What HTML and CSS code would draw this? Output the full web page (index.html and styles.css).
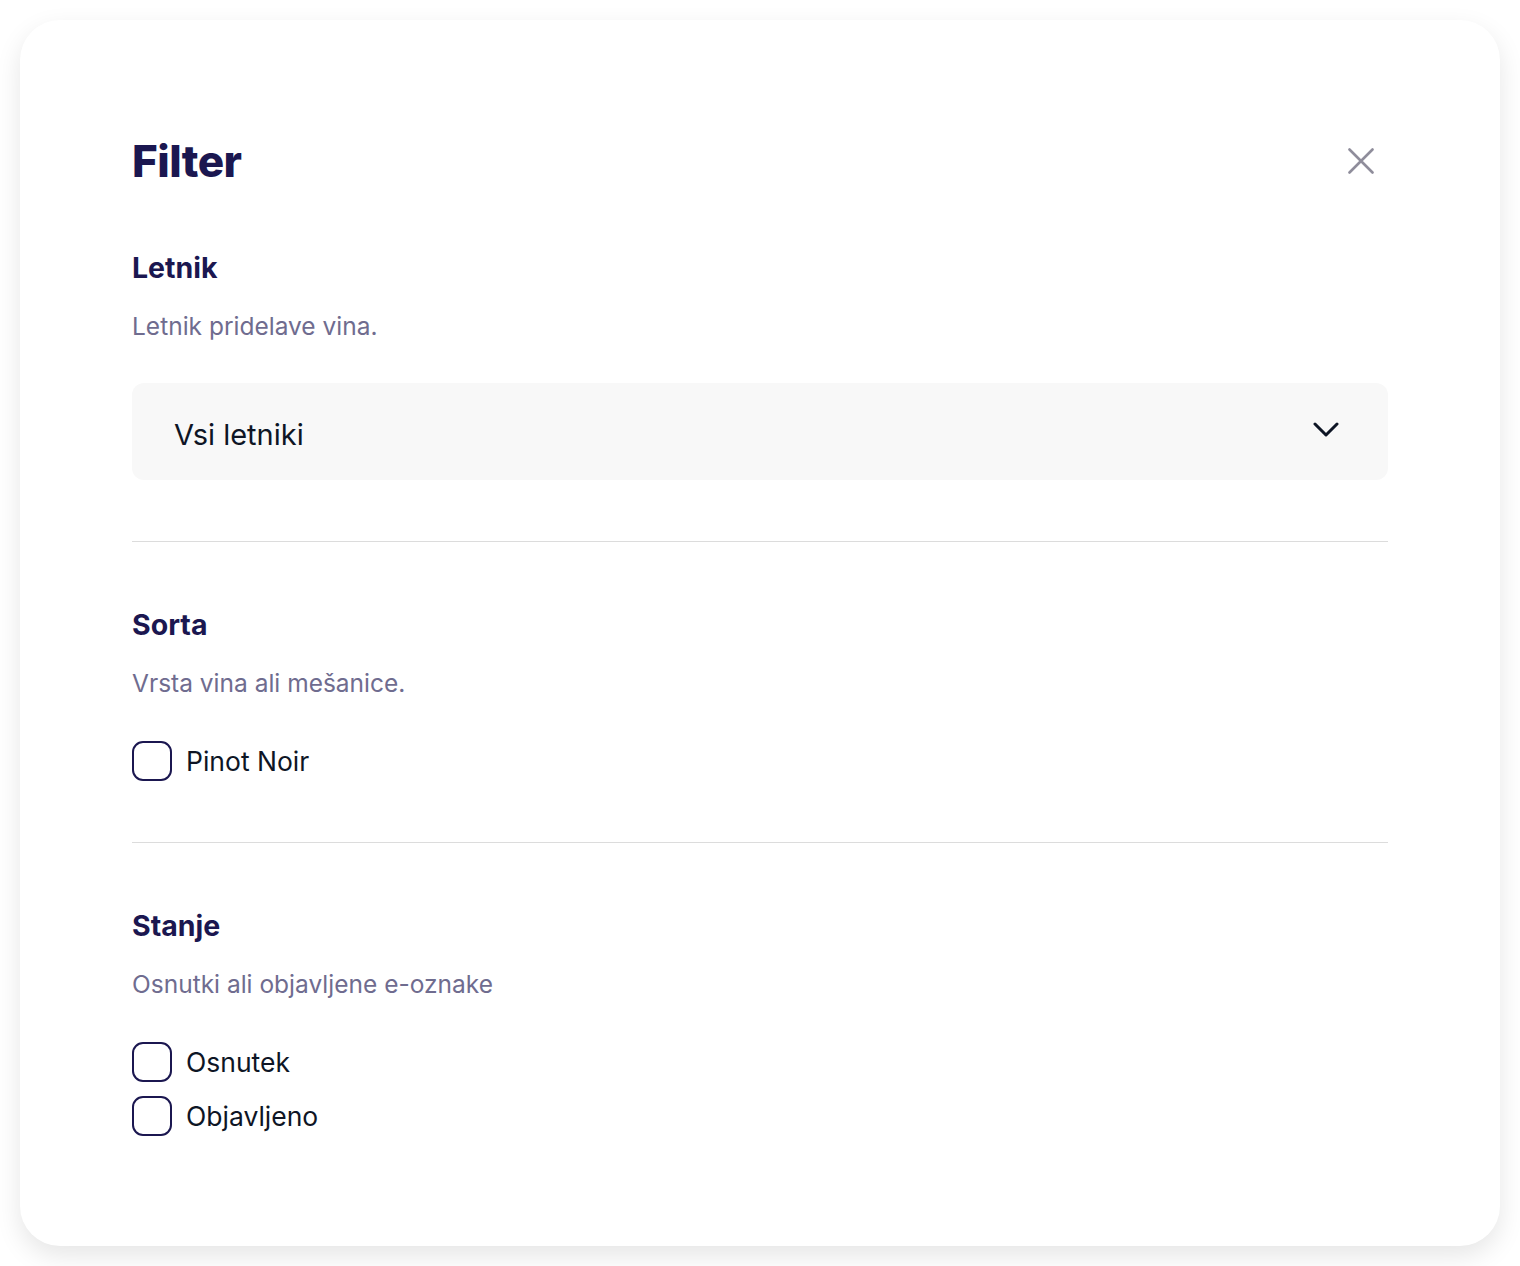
FILE: index.html
```html
<!DOCTYPE html>
<html lang="sl">
<head>
    <meta charset="UTF-8">
    <meta name="viewport" content="width=device-width, initial-scale=1.0">
    <title>Filter</title>
    <link rel="stylesheet" href="styles.css">
</head>
<body>

<div class="filter-card">
    <div class="filter-header">
        <h1>Filter</h1>
        <button class="close-btn" aria-label="Zapri">
            <svg width="26" height="26" viewBox="0 0 26 26" fill="none" stroke="currentColor" stroke-width="2.6" stroke-linecap="round">
                <path d="M1.5 1.5 L24.5 24.5 M24.5 1.5 L1.5 24.5"/>
            </svg>
        </button>
    </div>

    <div class="filter-section">
        <h2>Letnik</h2>
        <p class="hint">Letnik pridelave vina.</p>
        <div class="select">
            <span>Vsi letniki</span>
            <svg width="26" height="16" viewBox="0 0 26 16" fill="none" stroke="currentColor" stroke-width="3" stroke-linecap="round" stroke-linejoin="round">
                <path d="M2 2 L13 13 L24 2"/>
            </svg>
        </div>
    </div>

    <div class="filter-section">
        <h2>Sorta</h2>
        <p class="hint">Vrsta vina ali mešanice.</p>
        <div class="options">
            <label class="option"><span class="box"></span>Pinot Noir</label>
        </div>
    </div>

    <div class="filter-section">
        <h2>Stanje</h2>
        <p class="hint">Osnutki ali objavljene e-oznake</p>
        <div class="options">
            <label class="option"><span class="box"></span>Osnutek</label>
            <label class="option"><span class="box"></span>Objavljeno</label>
        </div>
    </div>
</div>

</body>
</html>
```

FILE: styles.css
```css
* {
    box-sizing: border-box;
    margin: 0;
    padding: 0;
}

body {
    background: #ffffff;
    font-family: Inter, "Noto Sans", sans-serif;
    color: #1b1750;
    padding: 20px;
    overflow: hidden;
}

.filter-card {
    background: #ffffff;
    border-radius: 40px;
    height: 1226px;
    padding: 116px 112px 111px;
    box-shadow: 0 10px 26px rgba(0, 0, 0, 0.1);
}

.filter-header {
    display: flex;
    align-items: center;
    justify-content: space-between;
    height: 50px;
    margin-bottom: 64px;
}

.filter-header h1 {
    font-size: 44px;
    line-height: 50px;
    font-weight: 800;
    letter-spacing: -0.5px;
}

.close-btn {
    width: 54px;
    height: 54px;
    display: flex;
    align-items: center;
    justify-content: center;
    background: none;
    border: none;
    color: #8f8d9b;
    cursor: pointer;
}

.filter-section {
    padding: 65px 0 61px;
    border-bottom: 1px solid #dcdcdc;
}

.filter-header + .filter-section {
    padding-top: 0;
}

.filter-section:last-child {
    border-bottom: none;
    padding-bottom: 0;
}

h2 {
    font-size: 28.5px;
    line-height: 36px;
    font-weight: 700;
}

.hint {
    margin-top: 24px;
    font-size: 24.5px;
    line-height: 32px;
    color: #6f6c8f;
}

.select {
    margin-top: 41px;
    height: 97px;
    background: #f8f8f8;
    border-radius: 12px;
    display: flex;
    align-items: center;
    justify-content: space-between;
    padding: 5px 49px 0 42px;
    color: #0e1525;
    font-size: 29px;
}

.select svg {
    margin-top: -8px;
}

.options {
    margin-top: 42px;
    display: flex;
    flex-direction: column;
    gap: 14px;
}

.option {
    display: flex;
    align-items: center;
    gap: 14px;
    font-size: 26.5px;
    line-height: 40px;
    color: #0e1525;
}

.box {
    width: 40px;
    height: 40px;
    border: 2.5px solid #1b1750;
    border-radius: 11px;
}
```
